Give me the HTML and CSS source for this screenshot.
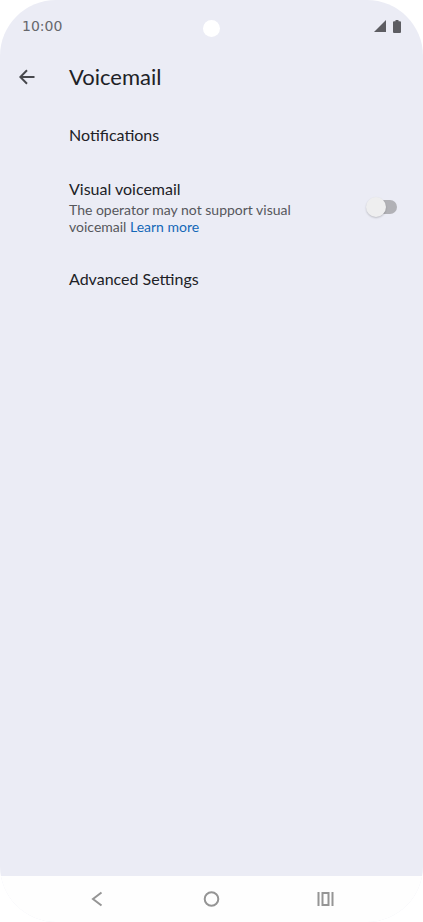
FILE: index.html
```
<!DOCTYPE html>
<html lang="en">
<head>
  <meta charset="UTF-8" />
  <meta name="viewport" content="width=device-width, initial-scale=1.0">
  <title>Voicemail</title>
  <link rel="stylesheet" href="styles.css">
</head>
<body>
  <div class="phone">
    <div class="status-bar">
      <span class="time">10:00</span>
      <span class="camera"></span>
      <div class="status-icons">
        <svg width="12" height="12" viewBox="0 0 12 12"><path d="M12 0v12H0z" /></svg>
        <svg width="8" height="13" viewBox="0 0 8 13"><path d="M2.5 0h3v1.2H7a1 1 0 0 1 1 1V12a1 1 0 0 1-1 1H1a1 1 0 0 1-1-1V2.2a1 1 0 0 1 1-1h1.5z" /></svg>
      </div>
    </div>

    <header>
      <button class="back-btn" type="button" aria-label="Back">
        <svg width="16" height="16" viewBox="0 0 16 16"><path d="M15.5 8H1.5M8 1.3L1.3 8L8 14.7" /></svg>
      </button>
      <h1>Voicemail</h1>
    </header>

    <main>
      <button class="setting" type="button">Notifications</button>

      <div class="setting-row">
        <div class="setting-text">
          <label for="visualVoicemail">Visual voicemail</label>
          <p>The operator may not support visual voicemail <a href="#">Learn more</a></p>
        </div>
        <input type="checkbox" class="switch" id="visualVoicemail">
      </div>

      <button class="setting" type="button">Advanced Settings</button>
    </main>

    <!-- System navigation -->
    <nav>
      <button type="button" aria-label="Back">
        <svg width="18" height="18" viewBox="0 0 18 18"><path d="M12.5 2.5L4 9l8.500 6.500" /></svg>
      </button>
      <button type="button" aria-label="Home">
        <svg width="18" height="18" viewBox="0 0 18 18"><circle cx="8.500" cy="9" r="6.800" /></svg>
      </button>
      <button type="button" aria-label="Recent apps">
        <svg width="18" height="18" viewBox="0 0 18 18"><path d="M1.500 2v14M15.500 2v14M5.500 3h6v12h-6z" /></svg>
      </button>
    </nav>
  </div>
</body>
</html>
```

FILE: styles.css
```
* {
  margin: 0;
  padding: 0;
  box-sizing: border-box;
}

body {
  font-family: Lato, Roboto, sans-serif;
  background: #fff;
  color: #202126;
}

button {
  background: none;
  border: none;
  color: inherit;
  font-family: inherit;
  cursor: pointer;
}

svg {
  display: block;
}

.phone {
  display: flex;
  flex-direction: column;
  min-height: 100vh;
  background: #ebecf5;
  border-radius: 56px;
  overflow: hidden;
}

/* Status bar */
.status-bar {
  display: grid;
  grid-template-columns: 1fr auto 1fr;
  align-items: center;
  height: 52px;
  padding: 0 22px;
}

.time {
  font-family: "DejaVu Sans", sans-serif;
  font-size: 14px;
  color: #66676c;
}

.camera {
  width: 17px;
  height: 17px;
  margin-top: 4px;
  border-radius: 50%;
  background: #fff;
}

.status-icons {
  display: flex;
  justify-content: flex-end;
  align-items: center;
  gap: 7px;
  fill: #5d5d62;
}

/* Title bar */
header {
  display: flex;
  align-items: center;
  height: 50px;
}

.back-btn {
  width: 69px;
  padding: 12px 19px;
}

.back-btn svg {
  fill: none;
  stroke: #47484d;
  stroke-width: 2;
}

h1 {
  padding-bottom: 2px;
  font-size: 22px;
  font-weight: 400;
}

/* Settings list */
main {
  flex: 1;
  padding-top: 9px;
}

.setting {
  display: block;
  width: 100%;
  padding: 12px 69px;
  font-size: 16px;
  line-height: 24px;
  text-align: left;
}

.setting-row {
  display: flex;
  align-items: center;
  justify-content: space-between;
  padding: 18px 26px 18px 69px;
}

.setting-text {
  flex: 0 1 232px;
}

.setting-text label {
  display: block;
  font-size: 16px;
  line-height: 24px;
}

.setting-text p {
  padding-bottom: 2px;
  font-size: 14px;
  line-height: 17px;
  color: #56575c;
}

.setting-text a {
  color: #1468b8;
  text-decoration: none;
}

.switch {
  appearance: none;
  display: flex;
  align-items: center;
  width: 28px;
  height: 14px;
  border-radius: 7px;
  background: #b1b1b6;
  cursor: pointer;
}

.switch::before {
  content: "";
  flex: none;
  width: 20px;
  height: 20px;
  margin-left: -3px;
  border-radius: 50%;
  background: #eeeeef;
  box-shadow: 0 1px 2px rgba(0, 0, 0, 0.2);
}

.switch:checked {
  justify-content: flex-end;
  background: #8db8e4;
}

/* Bottom navigation */
nav {
  display: flex;
  justify-content: center;
  gap: 66px;
  padding: 8px 0;
  background: #fefefe;
}

nav button {
  padding: 6px 15px;
}

nav svg {
  fill: none;
  stroke: #959595;
  stroke-width: 2;
}
```
